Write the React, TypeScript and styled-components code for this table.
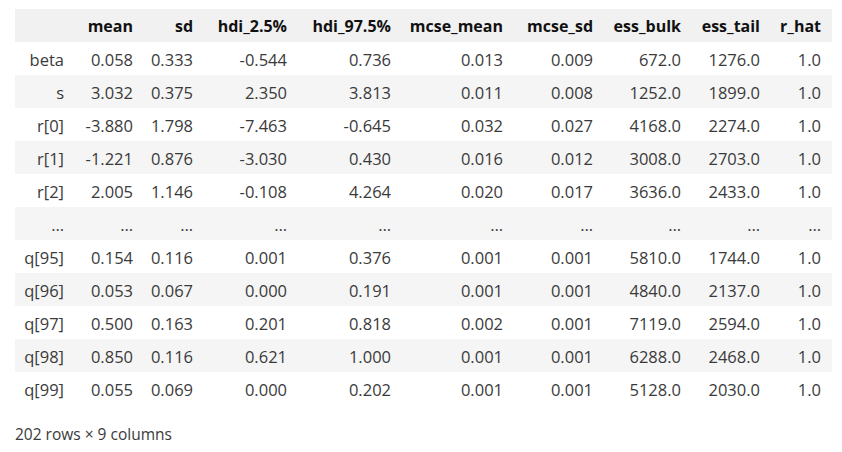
import React from "react";
import styled, { createGlobalStyle } from "styled-components";

const Global = createGlobalStyle`
  html, body { margin: 0; padding: 0; background: #ffffff; }
  body { font-family: "Open Sans", "Noto Sans", sans-serif; }
`;

const Page = styled.div`
  padding: 9px 10px 0 15px;
  color: #3a3a3a;
`;

const Table = styled.table`
  border-collapse: collapse;
  border-spacing: 0;
  table-layout: fixed;
  width: 817px;
  font-size: 16.5px;
`;

const Row = styled.tr<{ $tone: "head" | "stripe" | "plain" }>`
  background: ${(p) =>
    p.$tone === "head" ? "#f1f1f1" : p.$tone === "stripe" ? "#f5f5f5" : "#ffffff"};
  height: 33px;
`;

const Head = styled.th`
  text-align: right;
  font-weight: 700;
  font-size: 16px;
  color: #111111;
  padding: 1px 11px 0 0;
  white-space: nowrap;
  vertical-align: middle;
`;

const Index = styled.th`
  text-align: right;
  font-weight: 400;
  color: #3a3a3a;
  padding: 2px 11px 0 0;
  white-space: nowrap;
  vertical-align: middle;
`;

const Cell = styled.td`
  text-align: right;
  padding: 2px 11px 0 0;
  white-space: nowrap;
  vertical-align: middle;
  color: #3a3a3a;
`;

const Footer = styled.div`
  margin-top: 18px;
  font-size: 15.5px;
  color: #3a3a3a;
`;

const widths = [60, 69, 60, 94, 104, 112, 90, 88, 79, 61];
const headers = [
  "",
  "mean",
  "sd",
  "hdi_2.5%",
  "hdi_97.5%",
  "mcse_mean",
  "mcse_sd",
  "ess_bulk",
  "ess_tail",
  "r_hat",
];

const rows: string[][] = [
  ["beta", "0.058", "0.333", "-0.544", "0.736", "0.013", "0.009", "672.0", "1276.0", "1.0"],
  ["s", "3.032", "0.375", "2.350", "3.813", "0.011", "0.008", "1252.0", "1899.0", "1.0"],
  ["r[0]", "-3.880", "1.798", "-7.463", "-0.645", "0.032", "0.027", "4168.0", "2274.0", "1.0"],
  ["r[1]", "-1.221", "0.876", "-3.030", "0.430", "0.016", "0.012", "3008.0", "2703.0", "1.0"],
  ["r[2]", "2.005", "1.146", "-0.108", "4.264", "0.020", "0.017", "3636.0", "2433.0", "1.0"],
  ["...", "...", "...", "...", "...", "...", "...", "...", "...", "..."],
  ["q[95]", "0.154", "0.116", "0.001", "0.376", "0.001", "0.001", "5810.0", "1744.0", "1.0"],
  ["q[96]", "0.053", "0.067", "0.000", "0.191", "0.001", "0.001", "4840.0", "2137.0", "1.0"],
  ["q[97]", "0.500", "0.163", "0.201", "0.818", "0.002", "0.001", "7119.0", "2594.0", "1.0"],
  ["q[98]", "0.850", "0.116", "0.621", "1.000", "0.001", "0.001", "6288.0", "2468.0", "1.0"],
  ["q[99]", "0.055", "0.069", "0.000", "0.202", "0.001", "0.001", "5128.0", "2030.0", "1.0"],
];

const show = (v: string) => (v === "..." ? "…" : v);

export default function App() {
  return (
    <Page>
      <Global />
      <Table>
        <colgroup>
          {widths.map((w, i) => (
            <col key={i} style={{ width: w }} />
          ))}
        </colgroup>
        <thead>
          <Row $tone="head">
            {headers.map((h, i) => (
              <Head key={i}>{h}</Head>
            ))}
          </Row>
        </thead>
        <tbody>
          {rows.map((r, ri) => (
            <Row key={ri} $tone={ri % 2 === 1 ? "stripe" : "plain"}>
              <Index>{show(r[0])}</Index>
              {r.slice(1).map((c, ci) => (
                <Cell key={ci}>{show(c)}</Cell>
              ))}
            </Row>
          ))}
        </tbody>
      </Table>
      <Footer>202 rows × 9 columns</Footer>
    </Page>
  );
}
